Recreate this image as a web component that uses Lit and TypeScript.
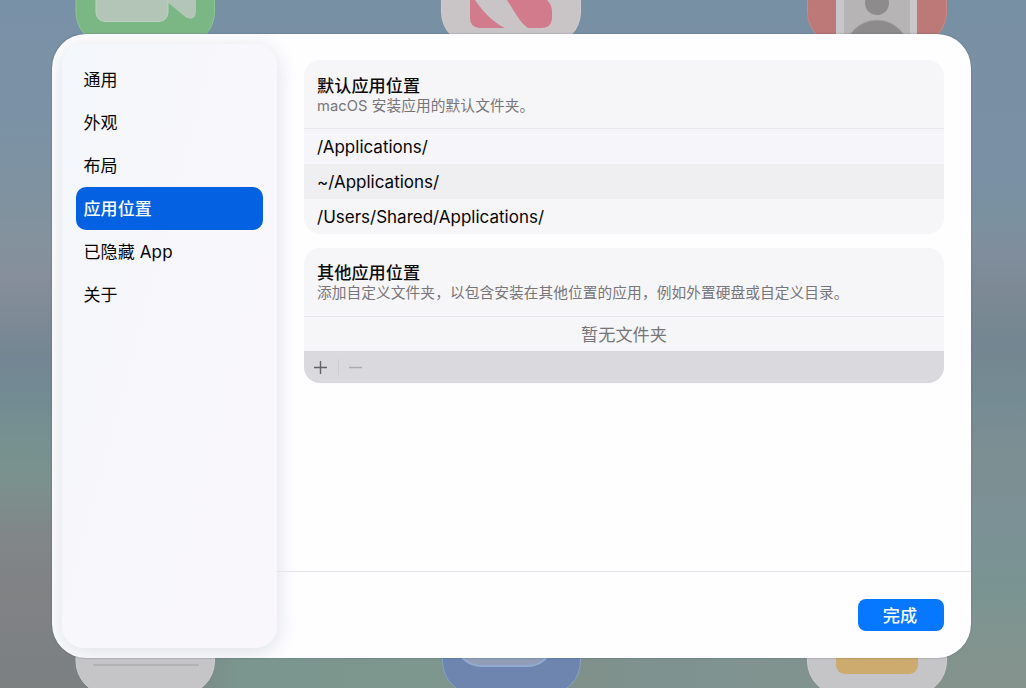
import { LitElement, html, css, svg } from "lit";
import { customElement, property, state } from "lit/decorators.js";

const SECTIONS = ["通用", "外观", "布局", "应用位置", "已隐藏 App", "关于"];
const DEFAULT_PATHS = ["/Applications/", "~/Applications/", "/Users/Shared/Applications/"];

@customElement("desktop-backdrop")
export class DesktopBackdrop extends LitElement {
  static styles = css`
    :host { display: block; }
    svg { display: block; width: 100%; height: 100%; }
  `;
  render() {
    return html`${svg`
      <svg viewBox="0 0 1026 688" preserveAspectRatio="none" aria-hidden="true">
        <defs>
          <linearGradient id="left" x1="0" y1="0" x2="0" y2="1">
            <stop offset="0" stop-color="#7991a7" />
            <stop offset=".18" stop-color="#7b92a5" />
            <stop offset=".3" stop-color="#80929f" />
            <stop offset=".36" stop-color="#84929d" />
            <stop offset=".4" stop-color="#868f9b" />
            <stop offset=".46" stop-color="#7e8a96" />
            <stop offset=".52" stop-color="#748693" />
            <stop offset=".58" stop-color="#728b93" />
            <stop offset=".64" stop-color="#769190" />
            <stop offset=".7" stop-color="#7b918e" />
            <stop offset=".78" stop-color="#818689" />
            <stop offset=".86" stop-color="#808284" />
            <stop offset="1" stop-color="#7c8081" />
          </linearGradient>
          <linearGradient id="right" x1="0" y1="0" x2="0" y2="1">
            <stop offset="0" stop-color="#7890a4" />
            <stop offset=".26" stop-color="#7a91a5" />
            <stop offset=".32" stop-color="#7b919f" />
            <stop offset=".37" stop-color="#808d9c" />
            <stop offset=".44" stop-color="#7b8993" />
            <stop offset=".5" stop-color="#738691" />
            <stop offset=".58" stop-color="#758b93" />
            <stop offset=".66" stop-color="#7c8f93" />
            <stop offset=".77" stop-color="#7b9195" />
            <stop offset=".86" stop-color="#7a9492" />
            <stop offset=".93" stop-color="#82948f" />
            <stop offset="1" stop-color="#84928c" />
          </linearGradient>
          <linearGradient id="bottom" x1="0" y1="0" x2="1" y2="0">
            <stop offset="0" stop-color="#7c8081" />
            <stop offset=".06" stop-color="#7c8081" />
            <stop offset=".17" stop-color="#7b968e" />
            <stop offset=".4" stop-color="#7d968e" />
            <stop offset=".57" stop-color="#80908a" />
            <stop offset=".7" stop-color="#7e9390" />
            <stop offset="1" stop-color="#84928c" />
          </linearGradient>
        </defs>
        <rect width="1026" height="688" fill="url(#right)" />
        <rect width="100" height="688" fill="url(#left)" />
        <rect x="100" y="640" width="826" height="48" fill="url(#bottom)" />

        <rect x="76" y="-104" width="138.500" height="149" rx="33" fill="#7bb685" stroke="#8bc796" />
        <rect x="96" y="-40" width="72" height="61.500" rx="9" fill="#b2c5b6" stroke="#c0d0c1" />
        <path d="M168 2 L186 17 Q195 21 195.500 12 V-5 H168 Z" fill="#b2c5b6" stroke="#bdcfbf" stroke-width=".7" />

        <rect x="441.500" y="-104" width="139" height="149" rx="33" fill="#c9c5c7" stroke="#d2cccc" />
        <path d="M470 0 H475 C481 9 492 22 505 28 H479 Q470 27 470 18 Z M507 0 H547 Q552 5 552 12 V19 Q551 28 541 28 H528 C521 24 514 11 507 0 Z" fill="#d27b8c" />

        <rect x="807.500" y="-104" width="139" height="149" rx="33" fill="#bd7878" stroke="#cb8887" />
        <rect x="836" y="-2" width="81" height="40" fill="#c8c6c8" />
        <rect x="844" y="-2" width="66" height="40" fill="#b6b4b5" />
        <circle cx="877" cy="3" r="12" fill="#8d8b8c" />
        <circle cx="877" cy="52" r="32" fill="#8d8b8c" stroke="#a5a3a4" />

        <rect x="76" y="580" width="138.500" height="115" rx="34" fill="#c5c4c7" stroke="#cecdcf" />
        <rect x="93" y="664" width="106" height="2" rx="1" fill="#b3b2b5" />

        <rect x="442.500" y="580" width="138" height="115" rx="34" fill="#6d85af" stroke="#86a3c4" />
        <rect x="459" y="630" width="91" height="36" rx="23" fill="#929eb8" stroke="#91abd0" stroke-width="2" />

        <rect x="807.500" y="580" width="139" height="115" rx="34" fill="#c5c4c7" stroke="#cecdcf" />
        <rect x="836" y="640" width="82" height="34" rx="9" fill="#cdaa6d" />
      </svg>`}`;
  }
}

@customElement("location-group")
export class LocationGroup extends LitElement {
  @property() heading = "";
  @property() description = "";

  static styles = css`
    :host { display: block; border-radius: 16px; overflow: hidden; background: #f6f5f8; }
    .head { box-sizing: border-box; height: 69px; padding: 14px 13px 0; border-bottom: 1px solid #e5e5e9; }
    :host(.lead) .head { padding-top: 15px; }
    .title { font-size: 17.200px; line-height: 22px; font-weight: 500; color: #0b0b0c; }
    .note { font-size: 14.700px; line-height: 18px; letter-spacing: .08px; color: #77767a; white-space: nowrap; }
  `;
  render() {
    return html`
      <div class="head">
        <div class="title">${this.heading}</div>
        <div class="note">${this.description}</div>
      </div>
      <slot></slot>
    `;
  }
}

@customElement("app-root")
export class AppRoot extends LitElement {
  @state() private selected = 3;

  static styles = css`
    :host {
      display: block; position: relative; width: 1026px; height: 688px; overflow: hidden;
      font-family: Inter, "Noto Sans CJK SC", sans-serif; color: #050506;
    }
    desktop-backdrop { position: absolute; inset: 0; }
    .stage { box-sizing: border-box; height: 100%; padding: 34px 55.500px 30px 51.500px; }
    .dialog {
      position: relative; box-sizing: border-box; height: 624px; display: flex; overflow: hidden;
      border-radius: 34px; background: #fefdff; box-shadow: 0 0 1.500px rgba(40, 60, 70, .6);
    }
    .side {
      flex: none; box-sizing: border-box; width: 215px; margin: 10px 0 10px 10.500px; padding: 14px 14px 0 13.500px;
      border-radius: 22px; background: linear-gradient(105deg, #f3f7fb, #f8f7fb 45%, #f9f7fb);
      box-shadow: 0 4px 20px rgba(50, 75, 100, .17); font-size: 17px; letter-spacing: .12px;
    }
    .item {
      box-sizing: border-box; height: 43px; padding: 0 8px 2px; display: flex; align-items: center;
      border-radius: 10px; white-space: pre; cursor: default;
    }
    .item.on { background: #0461e2; color: #fff; font-weight: 500; }
    .main { flex: 1; display: flex; flex-direction: column; min-width: 0; }
    .groups { flex: 1; display: flex; flex-direction: column; gap: 14px; padding: 26px 26.500px 0 27px; }
    .row { height: 35px; padding: 0 13px; display: flex; align-items: center; font-size: 17px; }
    .row.first { background: #f5f5fa; }
    .row.alt { background: #efeef1; }
    .empty {
      box-sizing: border-box; height: 34px; padding-bottom: 1px; display: flex; align-items: center;
      justify-content: center; font-size: 17.200px; color: #767579;
    }
    .tools { height: 32px; display: flex; align-items: center; background: #dad9de; padding-left: 9px; }
    .tools svg { width: 15px; height: 15px; }
    .tool { display: flex; }
    .bar { width: 1px; height: 16px; background: #cecdd2; margin: 0 9px 0 10px; }
    .foot {
      box-sizing: border-box; height: 87px; border-top: 1px solid #e5e4e8; display: flex;
      justify-content: flex-end; align-items: center; padding-right: 26.500px;
    }
    .done {
      box-sizing: border-box; width: 86px; height: 32px; padding: 0 2px 1px 0; border-radius: 8px; background: #0677ff;
      color: #fff; font-size: 17.200px; font-weight: 500; display: flex; align-items: center; justify-content: center;
    }
  `;

  render() {
    return html`
      <desktop-backdrop></desktop-backdrop>
      <div class="stage">
        <div class="dialog" role="dialog">
          <nav class="side">
            ${SECTIONS.map((label, i) => html`<div class="item ${i === this.selected ? "on" : ""}" @click=${() => (this.selected = i)}>${label}</div>`)}
          </nav>
          <section class="main">
            <div class="groups">
              <location-group class="lead" heading="默认应用位置" description="macOS 安装应用的默认文件夹。">
                ${DEFAULT_PATHS.map((path, i) => html`<div class="row ${i === 0 ? "first" : i === 1 ? "alt" : ""}"><span class="path">${path}</span></div>`)}
              </location-group>
              <location-group heading="其他应用位置" description="添加自定义文件夹，以包含安装在其他位置的应用，例如外置硬盘或自定义目录。">
                <div class="empty">暂无文件夹</div>
                <div class="tools">
                  <span class="tool"><svg viewBox="0 0 15 15"><path d="M1 7.500 H14 M7.500 1 V14" stroke="#626166" stroke-width="1.400" /></svg></span>
                  <span class="bar"></span>
                  <span class="tool"><svg viewBox="0 0 15 15"><path d="M1 7.500 H14" stroke="#adacb1" stroke-width="1.400" /></svg></span>
                </div>
              </location-group>
            </div>
            <div class="foot"><div class="done" role="button">完成</div></div>
          </section>
        </div>
      </div>
    `;
  }
}
